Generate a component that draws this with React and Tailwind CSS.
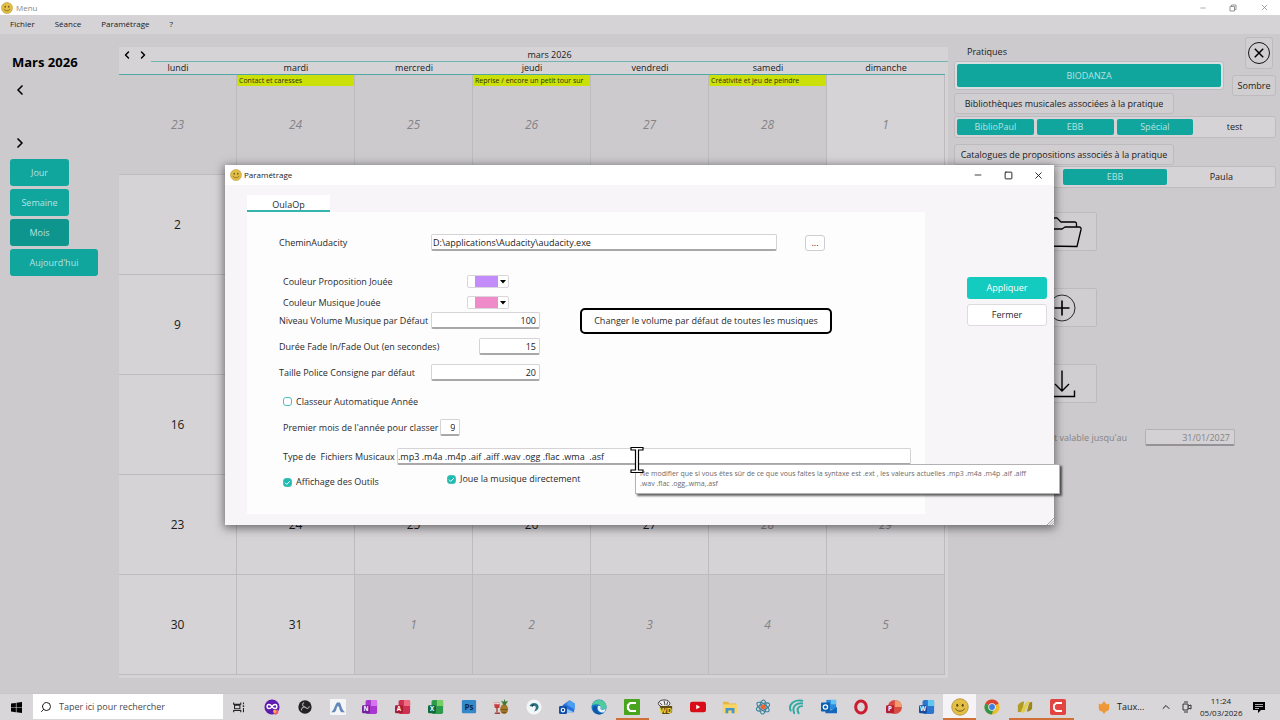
import clsx from "clsx";
import { ChevronLeft, ChevronRight, ChevronUp, Minus, Search, Square, X } from "lucide-react";

const DAYS = ["lundi", "mardi", "mercredi", "jeudi", "vendredi", "samedi", "dimanche"];

const WEEKS = [
  [23, 24, 25, 26, 27, 28, 1],
  [2, 3, 4, 5, 6, 7, 8],
  [9, 10, 11, 12, 13, 14, 15],
  [16, 17, 18, 19, 20, 21, 22],
  [23, 24, 25, 26, 27, 28, 29],
  [30, 31, 1, 2, 3, 4, 5],
];

const EVENTS = {
  "0-1": "Contact et caresses",
  "0-3": "Reprise / encore un petit tour sur",
  "0-5": "Créativité et jeu de peindre",
};

function Smiley({ className }) {
  return (
    <svg viewBox="0 0 20 20" className={className} aria-hidden="true">
      <circle cx="10" cy="10" r="9.2" fill="#e3bf45" stroke="#a98a2c" strokeWidth="0.8" />
      <ellipse cx="7" cy="8" rx="1.1" ry="1.7" fill="#5b4716" />
      <ellipse cx="13" cy="8" rx="1.1" ry="1.7" fill="#5b4716" />
      <path d="M5 12c2 3.6 8 3.6 10 0" fill="none" stroke="#5b4716" strokeWidth="1" strokeLinecap="round" />
    </svg>
  );
}

function TitleBar() {
  return (
    <header className="flex h-[15px] items-center bg-white pl-px text-[8px] text-[#8a888b]">
      <Smiley className="size-3" />
      <span className="ml-[3px] flex-1">Menu</span>
      <button aria-label="Réduire" className="grid w-[30px] place-items-center">
        <Minus className="size-2" strokeWidth={2} />
      </button>
      <button aria-label="Restaurer" className="grid w-[30px] place-items-center">
        <svg viewBox="0 0 8 8" className="size-2" fill="none" stroke="currentColor" strokeWidth="0.9">
          <path d="M1 2.5h4.5V7H1zM2.5 2.5V1H7v4.5H5.500" />
        </svg>
      </button>
      <button aria-label="Quitter" className="grid w-[32px] place-items-center">
        <X className="size-[9px]" strokeWidth={2} />
      </button>
    </header>
  );
}

function MenuBar() {
  return (
    <nav className="flex h-[19px] items-center gap-5 bg-[#d5d3d6] pb-[2px] pl-[10px] text-[8px] font-medium text-[#1b1a1c]">
      <button>Fichier</button>
      <button>Séance</button>
      <button>Paramétrage</button>
      <button>?</button>
    </nav>
  );
}

function TealButton({ children, className }) {
  return (
    <button className={clsx("h-[27px] rounded-[3px] text-[9px] text-[#b5e2e0]", className)}>
      {children}
    </button>
  );
}

function Sidebar() {
  return (
    <aside className="w-[119px] shrink-0 pl-[10px]">
      <h1 className="mt-4 pl-[2px] text-[13px] leading-6 font-bold text-black">Mars 2026</h1>
      <div className="mt-2 flex flex-col items-start gap-[37px] pl-[2px] text-black">
        <button aria-label="Mois précédent">
          <ChevronLeft className="size-4" strokeWidth={2.5} />
        </button>
        <button aria-label="Mois suivant">
          <ChevronRight className="size-4" strokeWidth={2.5} />
        </button>
      </div>
      <div className="mt-2 flex flex-col items-start gap-[3px]">
        <TealButton className="w-[59px] bg-[#10a69e]">Jour</TealButton>
        <TealButton className="w-[59px] bg-[#10a69e]">Semaine</TealButton>
        <TealButton className="w-[59px] bg-[#0d958e]">Mois</TealButton>
        <TealButton className="w-[88px] bg-[#10a69e]">Aujourd'hui</TealButton>
      </div>
    </aside>
  );
}

function DayCell({ week, index, day }) {
  const outside = (week === 0 && index < 6) || (week === 5 && index > 1);
  const muted = outside || index > 4;
  const event = EVENTS[`${week}-${index}`];
  return (
    <td
      className={clsx(
        "border-r border-b border-[#bdbbbe] p-0",
        outside ? "bg-[#cccacd]" : "bg-[#d5d3d6]"
      )}
    >
      <div className="flex h-[99px] flex-col pb-3">
        <div className="h-3">
          {event && (
            <p className="h-[11px] overflow-hidden bg-[#cbe008] pl-[2px] text-[7px] leading-[11px] font-medium whitespace-nowrap text-[#2b2f08]">
              {event}
            </p>
          )}
        </div>
        <span
          className={clsx(
            "m-auto text-[12px] leading-4",
            muted ? "text-[#858386] italic" : "text-[#1b1a1c]"
          )}
        >
          {day}
        </span>
      </div>
    </td>
  );
}

function Calendar() {
  return (
    <section className="mt-[13px] mb-[15px] min-w-0 flex-1 bg-[#d5d3d6] pr-[3px]">
      <div className="-mr-[3px] flex h-[15px] text-[9px] leading-4 text-[#1b1a1c]">
        <div className="flex w-8 items-center justify-around text-black">
          <button aria-label="Précédent">
            <ChevronLeft className="size-3" strokeWidth={3} />
          </button>
          <button aria-label="Suivant">
            <ChevronRight className="size-3" strokeWidth={3} />
          </button>
        </div>
        <div className="flex-1 border-b border-[#6fb5b1] text-center">mars 2026</div>
      </div>
      <table className="w-full table-fixed border-separate border-spacing-0">
        <thead>
          <tr>
            {DAYS.map((d) => (
              <th
                key={d}
                scope="col"
                className="h-[13px] border-b border-[#4fa9a4] p-0 text-[9px] leading-[12px] font-normal text-[#1b1a1c]"
              >
                {d}
              </th>
            ))}
          </tr>
        </thead>
        <tbody>
          {WEEKS.map((days, w) => (
            <tr key={w}>
              {days.map((day, i) => (
                <DayCell key={i} week={w} index={i} day={day} />
              ))}
            </tr>
          ))}
        </tbody>
      </table>
    </section>
  );
}

function Segments({ items }) {
  return (
    <div className="flex gap-[3px] rounded-[3px] border border-[#bdbbbe] bg-[#d5d3d6] p-[2px]">
      {items.map(({ label, on }, i) => (
        <button
          key={i}
          className={clsx(
            "h-4 flex-1 rounded-[2px] text-[9px]",
            on ? "bg-[#10a69e] text-[#b5e2e0]" : "text-[#1b1a1c]"
          )}
        >
          {label}
        </button>
      ))}
    </div>
  );
}

function IconTile({ label, children }) {
  return (
    <button
      aria-label={label}
      className="grid h-[39px] w-[70px] place-items-center rounded-[2px] border border-[#bdbbbe] bg-[#d0ced1]"
    >
      {children}
    </button>
  );
}

function PracticePanel() {
  const flat = "rounded-[3px] border border-[#bdbbbe] bg-[#d0ced1] text-[9px] text-[#1b1a1c]";
  return (
    <aside className="w-[332px] shrink-0 pt-[3px] pr-1 pl-[6px] text-[9px] text-[#1b1a1c]">
      <div className="flex justify-between">
        <div className="w-[270px] pt-2">
          <p className="h-4 pl-[13px] leading-[14px]">Pratiques</p>
          <div className="rounded-[3px] border border-[#bdbbbe] bg-[#d8dfe0] p-[2px]">
            <button className="h-[23px] w-full rounded-[2px] bg-[#10a69e] text-[#b5e2e0]">BIODANZA</button>
          </div>
          <button className={clsx(flat, "mt-[3px] block h-[21px] w-[220px]")}>
            Bibliothèques musicales associées à la pratique
          </button>
        </div>
        <div className="flex flex-col items-end gap-[6px]">
          <button aria-label="Fermer la session" className={clsx(flat, "mr-[3px] grid h-8 w-7 place-items-center")}>
            <svg viewBox="0 0 24 24" className="size-6" fill="none" stroke="black">
              <circle cx="12" cy="12" r="10.500" strokeWidth="0.9" />
              <path d="M7.800 7.800l8.400 8.400M16.200 7.800l-8.400 8.400" strokeWidth="1.500" />
            </svg>
          </button>
          <button className={clsx(flat, "h-[21px] w-11")}>Sombre</button>
        </div>
      </div>
      <div className="mt-[2px]">
        <Segments
          items={[
            { label: "BiblioPaul", on: true },
            { label: "EBB", on: true },
            { label: "Spécial", on: true },
            { label: "test" },
          ]}
        />
      </div>
      <button className={clsx(flat, "mt-[6px] block h-[21px] w-[220px]")}>
        Catalogues de propositions associés à la pratique
      </button>
      <div className="mt-[1px]">
        <Segments items={[{ label: "" }, { label: "EBB", on: true }, { label: "Paula" }]} />
      </div>
      <div className="mt-6 flex flex-col gap-[37px] pl-[73px]">
        <IconTile label="Ouvrir">
          <svg viewBox="0 0 40 32" className="h-8 w-10" fill="none" stroke="black" strokeWidth="1.300" strokeLinejoin="round">
            <path d="M1 30V4a2 2 0 0 1 2-2h12l4 4h14q1.500 0 1.500 2v3" />
            <path d="M1 30l4-17h15l3-2h14q2.500 0 2 2.500l-4 17z" />
          </svg>
        </IconTile>
        <IconTile label="Ajouter">
          <svg viewBox="0 0 30 30" className="size-[30px]" fill="none" stroke="black">
            <circle cx="15" cy="15" r="13" strokeWidth="0.8" />
            <path d="M15 7.500v15M7.500 15h15" strokeWidth="1.600" />
          </svg>
        </IconTile>
        <IconTile label="Télécharger">
          <svg viewBox="0 0 30 30" className="size-[30px]" fill="none" stroke="black" strokeWidth="1.400">
            <path d="M15 1.500V21M8 15l7 7 7-7M2.500 21.500V27.500h25V21.500" />
          </svg>
        </IconTile>
      </div>
      <div className="mt-[26px] flex items-center justify-end gap-[18px] pr-[41px] text-[#858386]">
        <label htmlFor="valid">est valable jusqu'au</label>
        <input
          id="valid"
          readOnly
          value="31/01/2027"
          className="h-[17px] w-[90px] rounded-[2px] border border-b-2 border-[#b3b1b4] border-b-[#949295] bg-[#d3d1d4] pr-1 text-right"
        />
      </div>
    </aside>
  );
}

function Field({ id, value, className }) {
  return (
    <input
      id={id}
      defaultValue={value}
      className={clsx(
        "h-[17px] shrink-0 rounded-[2px] border border-b-2 border-[#d5d3d6] border-b-[#a9a7aa] bg-white text-[#1b1a1c] outline-none",
        className
      )}
    />
  );
}

function ColorPicker({ id, swatch }) {
  return (
    <button
      id={id}
      className="flex h-[13px] w-[42px] items-center rounded-[2px] border border-[#d8d6d9] bg-white pl-[7px]"
    >
      <span className={clsx("h-[11px] w-[23px]", swatch)} />
      <svg viewBox="0 0 6 4" className="ml-[2px] h-1 w-[6px]" aria-hidden="true">
        <path d="M0 0h6L3 3.500z" fill="black" />
      </svg>
    </button>
  );
}

function Tick({ label, checked }) {
  return (
    <label className="flex items-center gap-1">
      <span className="grid size-[9px]">
        <input
          type="checkbox"
          defaultChecked={checked}
          className="peer col-start-1 row-start-1 size-[9px] appearance-none rounded-[3px] border border-[#4cc0b8] bg-white checked:bg-[#1dbcb1]"
        />
        <svg
          viewBox="0 0 9 9"
          className="pointer-events-none col-start-1 row-start-1 hidden size-[9px] peer-checked:block"
        >
          <path d="M2 4.600l1.800 1.800L7 3" fill="none" stroke="white" strokeWidth="1" />
        </svg>
      </span>
      {label}
    </label>
  );
}

function SettingsForm() {
  const row = "flex h-[17px] items-center";
  return (
    <form className="w-[678px] bg-[#fdfdfe] pt-[22px] pb-[26px] pl-8 whitespace-nowrap">
      <div className={row}>
        <label htmlFor="audacity" className="w-[152px]">CheminAudacity</label>
        <Field id="audacity" value="D:\applications\Audacity\audacity.exe" className="w-[346px] pl-px" />
        <button type="button" aria-label="Parcourir" className="ml-7 h-4 w-5 rounded-[3px] border border-[#cfcdd0] bg-white leading-3">
          ...
        </button>
      </div>
      <div className={clsx(row, "mt-[22px] pl-1")}>
        <label htmlFor="c1" className="w-[184px]">Couleur Proposition Jouée</label>
        <ColorPicker id="c1" swatch="bg-[#c48cfb]" />
      </div>
      <div className={clsx(row, "mt-1 pl-1")}>
        <label htmlFor="c2" className="w-[184px]">Couleur Musique Jouée</label>
        <ColorPicker id="c2" swatch="bg-[#ee8bc8]" />
      </div>
      <div className={clsx(row, "mt-[1px]")}>
        <label htmlFor="volume" className="w-[152px]">Niveau Volume Musique par Défaut</label>
        <Field id="volume" value="100" className="w-[109px] pr-[3px] text-right" />
        <button type="button" className="ml-10 h-[26px] w-[252px] rounded-[5px] border-2 border-black bg-white">
          Changer le volume par défaut de toutes les musiques
        </button>
      </div>
      <div className={clsx(row, "mt-[9px]")}>
        <label htmlFor="fade" className="w-[200px]">Durée Fade In/Fade Out (en secondes)</label>
        <Field id="fade" value="15" className="w-[61px] pr-[3px] text-right" />
      </div>
      <div className={clsx(row, "mt-[9px]")}>
        <label htmlFor="police" className="w-[152px]">Taille Police Consigne par défaut</label>
        <Field id="police" value="20" className="w-[109px] pr-[3px] text-right" />
      </div>
      <div className={clsx(row, "mt-3 pl-1")}>
        <Tick label="Classeur Automatique Année" />
      </div>
      <div className={clsx(row, "mt-[9px] gap-[2px] pl-1")}>
        <label htmlFor="mois">Premier mois de l'année pour classer</label>
        <Field id="mois" value="9" className="w-5 pr-1 text-right" />
      </div>
      <div className={clsx(row, "mt-3 pl-1")}>
        <label htmlFor="types" className="w-[114px] whitespace-pre">Type de  Fichiers Musicaux</label>
        <Field id="types" value=".mp3 .m4a .m4p .aif .aiff .wav .ogg .flac .wma  .asf" className="w-[514px]" />
      </div>
      <div className="mt-2 flex h-[15px] items-end pl-1">
        <div className="w-[164px]">
          <Tick label="Affichage des Outils" checked />
        </div>
        <div className="self-start">
          <Tick label="Joue la musique directement" checked />
        </div>
      </div>
    </form>
  );
}

function SettingsWindow() {
  return (
    <div
      role="dialog"
      aria-label="Paramétrage"
      className="absolute top-[165px] left-[225px] w-[829px] bg-[#f7f5f8] text-[9px] leading-3 text-[#2b2a2c] shadow-[0_2px_9px_1px_rgba(0,0,0,0.5)]"
    >
      <div className="flex h-5 items-center bg-white pl-[5px] text-[8px] text-[#1b1a1c]">
        <Smiley className="size-3" />
        <span className="ml-[2px] flex-1">Paramétrage</span>
        <button aria-label="Réduire" className="grid w-[30px] place-items-center">
          <Minus className="size-[10px]" strokeWidth={2} />
        </button>
        <button aria-label="Agrandir" className="grid w-[30px] place-items-center">
          <Square className="size-[9px]" strokeWidth={2.5} />
        </button>
        <button aria-label="Fermer" className="grid w-[31px] place-items-center">
          <X className="size-[11px]" strokeWidth={2} />
        </button>
      </div>
      <div className="flex pt-[10px] pb-[11px] pl-[22px]">
        <div>
          <button className="block h-[17px] w-[83px] border-b-2 border-[#35b5ad] bg-white pt-1 text-[9px]">
            OulaOp
          </button>
          <SettingsForm />
        </div>
        <div className="mt-[82px] ml-[42px] flex flex-col gap-[5px]">
          <button className="h-[22px] w-20 rounded-[3px] bg-[#14cbc0] text-[9px] text-white">Appliquer</button>
          <button className="h-[22px] w-20 rounded-[3px] border border-[#dddbde] bg-white text-[9px]">Fermer</button>
        </div>
      </div>
      <svg viewBox="0 0 8 8" className="absolute right-0 bottom-0 size-2" stroke="#8a888b" strokeWidth="0.8">
        <path d="M1 8l7-7M3.500 8L8 3.500M6 8l2-2" />
      </svg>
    </div>
  );
}

function Tooltip() {
  return (
    <>
      <div
        role="tooltip"
        className="absolute top-[464px] left-[635px] w-[425px] border border-[#b3b1b4] bg-white py-1 pr-7 pl-1 text-[7px] leading-[10px] text-[#6b696c] shadow-[2px_2px_2px_rgba(0,0,0,0.6)]"
      >
        Ne modifier que si vous êtes sûr de ce que vous faites la syntaxe est .ext , les valeurs actuelles .mp3 .m4a .m4p .aif .aiff .wav .flac .ogg,.wma,.asf
      </div>
      <svg viewBox="0 0 14 28" className="absolute top-[446px] left-[630px] h-7 w-[14px]" fill="white" stroke="black" strokeWidth="1.200">
        <path d="M1 1.500h12v2.500H8.500v20H13v2.500H1V24h4.500V4H1z" />
      </svg>
    </>
  );
}

// Office style tile: coloured sheets with a small lettered badge
function OfficeIcon({ letter, light, mid, dark, round }) {
  return (
    <svg viewBox="0 0 18 18" className="size-4" aria-hidden="true">
      {round ? (
        <>
          <circle cx="10" cy="9" r="8" fill={mid} />
          <path d="M10 1a8 8 0 0 1 8 8h-8z" fill={light} />
        </>
      ) : (
        <>
          <rect x="4" y="1" width="13" height="16" rx="2" fill={mid} />
          <path d="M10 1h5a2 2 0 0 1 2 2v5h-7z" fill={light} />
        </>
      )}
      <rect x="0" y="7" width="9" height="9" rx="1.500" fill={dark} />
      <text x="4.500" y="14" fontSize="7" fontWeight="700" textAnchor="middle" fill="white">{letter}</text>
    </svg>
  );
}

function Icon({ children }) {
  return (
    <svg viewBox="0 0 18 18" className="size-4" aria-hidden="true">
      {children}
    </svg>
  );
}

const TASKS = [
  {
    name: "Vue des tâches",
    icon: (
      <Icon>
        <path d="M3 4v2h8V4M3 15v-2h8v2M4 7h6v4H4zM14 4v2M14 10v5" fill="none" stroke="#222" strokeWidth="1.200" />
        <circle cx="14" cy="8" r="1" fill="#222" />
      </Icon>
    ),
  },
  {
    name: "Assistant",
    icon: (
      <Icon>
        <circle cx="9" cy="9" r="8.500" fill="#5f1bb0" />
        <path d="M9 8.500c-2-3-5.500-3-5.500 0s3.500 3 5.500 0 5.500-3 5.500 0-3.500 3-5.500 0z" fill="none" stroke="white" strokeWidth="1.600" />
        <path d="M11 12h5v4l-3 2-2-2z" fill="#f0567c" />
        <circle cx="12" cy="14" r="1.800" fill="#ffad3b" />
      </Icon>
    ),
  },
  {
    name: "OBS",
    icon: (
      <Icon>
        <circle cx="9" cy="9" r="7.500" fill="#242225" />
        <path d="M8 4c-3 2-2 4 1 5M14 8c-1 4-3 3-5 1M5 13c0-3 2-4 4-4" fill="none" stroke="#aaa8ab" strokeWidth="1.200" />
      </Icon>
    ),
  },
  {
    name: "Montage",
    icon: (
      <Icon>
        <rect width="18" height="18" rx="1" fill="#f3f5f7" />
        <path d="M1 15C5 13 5 7 8 4h3c2 3 2 8 6 11h-4C10 13 11 9 9 8c-2 1-1 5-4 7z" fill="#6387bb" />
      </Icon>
    ),
  },
  { name: "OneNote", icon: <OfficeIcon letter="N" light="#d774ee" mid="#a737cf" dark="#7421a0" /> },
  { name: "Access", icon: <OfficeIcon letter="A" light="#ef6b80" mid="#cf3052" dark="#a61c37" /> },
  { name: "Excel", icon: <OfficeIcon letter="X" light="#75cf62" mid="#2c9b4d" dark="#12683a" /> },
  {
    name: "Photoshop",
    icon: (
      <Icon>
        <rect x="1" y="1" width="16" height="15" rx="1.500" fill="#3288c9" />
        <text x="9" y="12" fontSize="9" fontWeight="700" textAnchor="middle" fill="#0b2748">Ps</text>
      </Icon>
    ),
  },
  {
    name: "Cocktail",
    icon: (
      <Icon>
        <path d="M1 4h7l-1 6H2z" fill="#c93d3d" />
        <path d="M1 4h7l-.500 2h-6z" fill="#e6d3ce" />
        <path d="M4.500 9v6M2 16h6" stroke="#a33d3b" strokeWidth="1.500" />
        <ellipse cx="12.500" cy="11.500" rx="4.500" ry="5.500" fill="#a5792a" />
        <path d="M12 7L9 2l3 1 1-3 1 3 3-1-3 5z" fill="#3f7a35" />
        <path d="M9 12h7M10 15h5" stroke="#6d4c19" />
      </Icon>
    ),
  },
  {
    name: "OpenEdit",
    icon: (
      <Icon>
        <circle cx="9" cy="9" r="8.500" fill="#f2f6f7" />
        <path d="M4 8c2-5 9-4 10 0 1 4-3 6-5 6 2-2 3-5 1-6-2-1-3 1-6 0z" fill="#2c7385" />
        <path d="M6 7l4-1-3 3z" fill="#103a47" />
      </Icon>
    ),
  },
  {
    name: "Courrier",
    icon: (
      <Icon>
        <path d="M4 7l7-5 6 4v9H5z" fill="#2b70d9" />
        <path d="M8 6l4-5 6 4v7z" fill="#4d9df0" />
        <path d="M5 9l12 6H5z" fill="#89c6ff" />
        <rect x="0" y="8" width="9" height="9" rx="1.500" fill="#1250a8" />
        <circle cx="4.500" cy="12.500" r="2" fill="none" stroke="white" strokeWidth="1.200" />
      </Icon>
    ),
  },
  {
    name: "Edge",
    icon: (
      <Icon>
        <circle cx="9" cy="9" r="8.500" fill="#1779ca" />
        <path d="M1 7C3-1 16-1 17.500 8c0 4-5 4-7 3 2-4-3-7-9.500-4z" fill="#4fcb9e" />
        <path d="M7 9c-2 5 3 8 8 6-5 5-13 1-13-4 0-3 3-4 5-2z" fill="#1155a5" />
        <path d="M8 8c2-1 4 1 2.500 3 2 2 5 1 6.500-.500l-2 4C10 17 6 12 8 8z" fill="#e3f0f5" />
      </Icon>
    ),
  },
  {
    name: "Camtasia",
    open: true,
    icon: (
      <Icon>
        <rect width="18" height="18" rx="1" fill="#48a51d" />
        <path d="M13.500 4.500H7L4.500 7v4L7 13.500h6.500" fill="none" stroke="white" strokeWidth="2.500" />
      </Icon>
    ),
  },
  {
    name: "WinDev",
    icon: (
      <Icon>
        <ellipse cx="8" cy="5" rx="6.500" ry="4" fill="#eee" stroke="#333" />
        <path d="M3 4l3 3M8 2l1 5M12 3l-1 4" stroke="#333" />
        <path d="M3 8h14v7l-4 2H6z" fill="#5d4f14" />
        <text x="10" y="15.500" fontSize="8" fontWeight="700" textAnchor="middle" fill="#f3d531">WD</text>
      </Icon>
    ),
  },
  {
    name: "YouTube",
    icon: (
      <Icon>
        <rect x="0" y="3" width="18" height="12" rx="2.500" fill="#d90d17" />
        <path d="M7 6.500v5L11.500 9z" fill="white" />
      </Icon>
    ),
  },
  {
    name: "Explorateur",
    icon: (
      <Icon>
        <path d="M1 3h6l1 2h8v10H1z" fill="#e5b740" />
        <path d="M1 6h16v10H1z" fill="#f7d568" />
        <path d="M4 16v-6h10v6h-3v-3H7v3z" fill="#4594cc" />
      </Icon>
    ),
  },
  {
    name: "Atome",
    icon: (
      <Icon>
        <g fill="none" stroke="#36829c" strokeWidth="1.200">
          <ellipse cx="9" cy="9" rx="8" ry="3.500" transform="rotate(35 9 9)" />
          <ellipse cx="9" cy="9" rx="8" ry="3.500" transform="rotate(95 9 9)" />
          <ellipse cx="9" cy="9" rx="8" ry="3.500" transform="rotate(155 9 9)" />
        </g>
        <circle cx="9" cy="9" r="2.800" fill="#ef6333" />
      </Icon>
    ),
  },
  {
    name: "Spirale",
    icon: (
      <Icon>
        <g fill="none" stroke="#31aaa3" strokeWidth="2.200" strokeLinecap="round">
          <path d="M16 2C7 0 0 6 3 13" />
          <path d="M16 5C9 4 4 9 7 16" />
          <path d="M16 8c-4 0-7 3-4 8" />
        </g>
      </Icon>
    ),
  },
  {
    name: "Outlook",
    icon: (
      <Icon>
        <rect x="6" y="1" width="11" height="11" fill="#2b8ade" />
        <path d="M11 1h6v5h-6z" fill="#62c2f4" />
        <path d="M5 9l6 4 7-4v7H5z" fill="#1268ba" />
        <rect x="0" y="4" width="10" height="10" rx="1" fill="#0b60af" />
        <circle cx="5" cy="9" r="2.400" fill="none" stroke="white" strokeWidth="1.400" />
      </Icon>
    ),
  },
  {
    name: "Opera",
    icon: (
      <Icon>
        <ellipse cx="9" cy="9" rx="6" ry="6.800" fill="none" stroke="#cb1c32" strokeWidth="3.400" />
      </Icon>
    ),
  },
  { name: "PowerPoint", icon: <OfficeIcon letter="P" light="#f39a70" mid="#d84b41" dark="#b31e31" round /> },
  { name: "Word", icon: <OfficeIcon letter="W" light="#61c6f0" mid="#2b76d1" dark="#174b9f" /> },
  { name: "OulaOp", active: true, open: true, icon: <Smiley className="size-[18px]" /> },
  {
    name: "Chrome",
    icon: (
      <Icon>
        <circle cx="9" cy="9" r="8.500" fill="#efbd29" />
        <path d="M9 9L1.500 5a8.500 8.500 0 0 1 15 0z" fill="#d94334" />
        <path d="M1.500 5A8.500 8.500 0 0 0 9 17.500L11 10z" fill="#35944b" />
        <circle cx="9" cy="9" r="4.200" fill="#f4f4f4" />
        <circle cx="9" cy="9" r="3.300" fill="#3f7fe0" />
      </Icon>
    ),
  },
  {
    name: "Studio",
    open: true,
    icon: (
      <Icon>
        <path d="M1 7q4-5 7-4L6 14l-5 1z" fill="#b09b24" />
        <path d="M5 15q-1-2 2-6l3-5q2-2 4-1l-5 11q-2 2-4 1z" fill="#e1ce50" />
        <path d="M11 14l3-10 3-1v8q-3 4-6 3z" fill="#9a8718" />
      </Icon>
    ),
  },
  {
    name: "Capture",
    open: true,
    icon: (
      <Icon>
        <rect width="18" height="18" rx="2" fill="#e24441" />
        <path d="M13.500 4.500H7L4.500 7v4L7 13.500h6.500" fill="none" stroke="white" strokeWidth="2" />
      </Icon>
    ),
  },
];

function Taskbar() {
  return (
    <footer className="flex h-[27px] items-stretch border-t border-[#c9c6c9] bg-[#d9d6d9] text-[9px] text-[#1b1a1c]">
      <button aria-label="Démarrer" className="grid w-[33px] place-items-center">
        <svg viewBox="0 0 12 12" className="size-[11px]">
          <path d="M0 1.700l5.300-.7v4.700H0zM6 .900L12 0v5.700H6zM0 6.400h5.300v4.700L0 10.400zM6 6.400h6V12l-6-.8z" />
        </svg>
      </button>
      <label className="mb-px flex w-[190px] items-center bg-white pl-[7px]">
        <Search className="size-3 -scale-x-100" strokeWidth={2} />
        <input
          aria-label="Rechercher"
          placeholder="Taper ici pour rechercher"
          className="ml-[7px] w-40 text-[9px] outline-none placeholder:text-[#4b494c]"
        />
      </label>
      <div className="flex flex-1">
        {TASKS.map(({ name, icon, open, active }) => (
          <button
            key={name}
            aria-label={name}
            className={clsx(
              "grid flex-1 place-items-center border-b-2 pt-[2px]",
              open ? "border-[#cf7038]" : "border-transparent",
              active && "bg-[#f5f3f5]"
            )}
          >
            {icon}
          </button>
        ))}
      </div>
      <div className="flex w-[206px] items-center pl-[23px]">
        <svg viewBox="0 0 14 16" className="size-[14px]">
          <path d="M1 4l3 1 3-4 3 4 3-1v5c0 3-3 4-4 4l-2 3-2-3c-2 0-4-1-4-4z" fill="#ef9838" />
        </svg>
        <span className="ml-[6px] w-[38px]">Taux...</span>
        <button aria-label="Icônes cachées" className="w-[21px]">
          <ChevronUp className="mx-auto size-3" strokeWidth={2} />
        </button>
        <svg viewBox="0 0 10 12" className="ml-[6px] h-3 w-[10px]" fill="none" stroke="#222" strokeWidth="0.900">
          <path d="M1 3h5v6H1zM6 5l3-1v4L6 7M2 1h4M2 11h4" />
        </svg>
        <div className="mx-2 w-[42px] text-center text-[8px] leading-3">
          <div>11:24</div>
          <div>05/03/2026</div>
        </div>
        <button aria-label="Notifications" className="ml-[3px]">
          <svg viewBox="0 0 12 12" className="size-3">
            <path d="M0 1h12v8H8l-3 3V9H0z" />
            <path d="M2 3.500h8M2 5.500h8M2 7.500h4" stroke="#d9d6d9" strokeWidth="0.800" />
          </svg>
        </button>
      </div>
    </footer>
  );
}

export default function App() {
  return (
    <div className="relative flex min-h-screen flex-col bg-[#cccacd] font-['Open_Sans','Noto_Sans',sans-serif]">
      <TitleBar />
      <MenuBar />
      <main className="flex flex-1">
        <Sidebar />
        <Calendar />
        <PracticePanel />
      </main>
      <Taskbar />
      <SettingsWindow />
      <Tooltip />
    </div>
  );
}
